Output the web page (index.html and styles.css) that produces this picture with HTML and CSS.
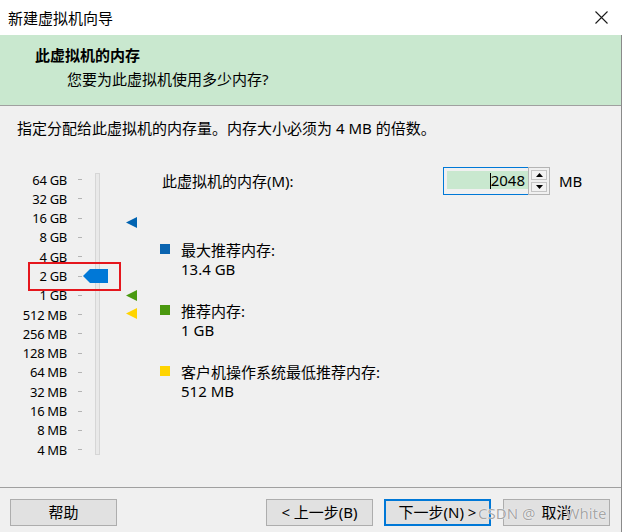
FILE: index.html
```html
<!DOCTYPE html>
<html lang="zh-CN">
<head>
<meta charset="utf-8">
<title>新建虚拟机向导</title>
<link rel="stylesheet" href="styles.css">
</head>
<body>
<div class="window">
  <div class="titlebar">
    <span class="title">新建虚拟机向导</span>
    <svg class="close" width="13" height="13" viewBox="0 0 13 13"><path d="M0.5 0.5 L12.5 12.5 M12.5 0.5 L0.5 12.5" stroke="#1a1a1a" stroke-width="1.1" fill="none"/></svg>
  </div>
  <div class="frame">
    <div class="header">
      <div class="h-title">此虚拟机的内存</div>
      <div class="h-sub">您要为此虚拟机使用多少内存?</div>
    </div>
    <div class="content">
      <p class="intro">指定分配给此虚拟机的内存量。内存大小必须为 4 MB 的倍数。</p>
      <div class="main">
        <div class="slider">
          <ul class="scale">
            <li><span class="lbl">64 GB</span><i class="tick"></i></li>
            <li><span class="lbl">32 GB</span><i class="tick"></i></li>
            <li><span class="lbl">16 GB</span><i class="tick"></i></li>
            <li><span class="lbl">8 GB</span><i class="tick"></i></li>
            <li><span class="lbl">4 GB</span><i class="tick"></i></li>
            <li><span class="lbl">2 GB</span><i class="tick"></i></li>
            <li><span class="lbl">1 GB</span><i class="tick"></i></li>
            <li><span class="lbl">512 MB</span><i class="tick"></i></li>
            <li><span class="lbl">256 MB</span><i class="tick"></i></li>
            <li><span class="lbl">128 MB</span><i class="tick"></i></li>
            <li><span class="lbl">64 MB</span><i class="tick"></i></li>
            <li><span class="lbl">32 MB</span><i class="tick"></i></li>
            <li><span class="lbl">16 MB</span><i class="tick"></i></li>
            <li><span class="lbl">8 MB</span><i class="tick"></i></li>
            <li><span class="lbl">4 MB</span><i class="tick"></i></li>
          </ul>
          <div class="track"></div>
          <svg class="thumb" style="top:102px" width="25" height="14" viewBox="0 0 25 14"><polygon points="0,7 7,0 25,0 25,14 7,14" fill="#0078d7"/></svg>
          <svg class="marker" style="top:50px" width="11" height="11" viewBox="0 0 11 11"><polygon points="0,5.5 11,0 11,11" fill="#0063b1"/></svg>
          <svg class="marker" style="top:123px" width="11" height="11" viewBox="0 0 11 11"><polygon points="0,5.5 11,0 11,11" fill="#4a9a10"/></svg>
          <svg class="marker" style="top:141px" width="11" height="11" viewBox="0 0 11 11"><polygon points="0,5.5 11,0 11,11" fill="#ffd400"/></svg>
          <div class="highlight"></div>
        </div>
        <div class="settings">
          <div class="mem-row">
            <span class="mem-label">此虚拟机的内存(M):</span>
            <div class="spin">
              <div class="field"><span class="sel"><span class="caret"></span>2048</span></div>
              <div class="spin-btns">
                <span class="sbtn"><svg width="7" height="4" viewBox="0 0 7 4"><polygon points="0,4 3.5,0 7,4" fill="#000"/></svg></span>
                <span class="sbtn"><svg width="7" height="4" viewBox="0 0 7 4"><polygon points="0,0 7,0 3.5,4" fill="#000"/></svg></span>
              </div>
            </div>
            <span class="unit">MB</span>
          </div>
          <ul class="legend">
            <li><i class="sq blue"></i><div class="ltext"><div>最大推荐内存:</div><div>13.4 GB</div></div></li>
            <li><i class="sq green"></i><div class="ltext"><div>推荐内存:</div><div>1 GB</div></div></li>
            <li><i class="sq yellow"></i><div class="ltext"><div>客户机操作系统最低推荐内存:</div><div>512 MB</div></div></li>
          </ul>
        </div>
      </div>
    </div>
    <div class="footer">
      <button class="btn">帮助</button>
      <div class="nav">
        <button class="btn">&lt; 上一步(B)</button>
        <button class="btn primary">下一步(N) &gt;</button>
        <button class="btn">取消</button>
      </div>
      <span class="watermark">CSDN @<span class="gap"></span>White</span>
    </div>
  </div>
</div>
</body>
</html>
```

FILE: styles.css
```css
* { box-sizing: border-box; }
html, body {
  margin: 0;
  padding: 0;
  width: 622px;
  height: 532px;
  overflow: hidden;
  background: #f0f0f0;
}
body {
  font-family: "Noto Sans", "Noto Sans CJK SC", sans-serif;
  font-size: 15px;
  color: #000;
}
ul { list-style: none; margin: 0; padding: 0; }

.window { width: 622px; height: 532px; }

.titlebar {
  height: 35px;
  background: #fff;
  display: flex;
  align-items: center;
  justify-content: space-between;
  padding: 0 14px 0 8px;
}
.title { line-height: 20px; color: #000; }
.close { display: block; }

.frame {
  border-right: 1px solid #8a8a8a;
  height: 497px;
}

.header {
  height: 71px;
  background: #c9e8cf;
  border-bottom: 1px solid #a0a0a0;
  padding: 10px 0 0 35px;
}
.h-title { font-weight: 700; line-height: 20px; }
.h-sub { margin: 4px 0 0 32px; line-height: 20px; }

.content {
  height: 381px;
  background: #f0f0f0;
}
.intro {
  margin: 0;
  padding: 12px 0 0 17px;
  line-height: 20px;
}

.main {
  display: flex;
  margin-top: 29px;
}

.slider {
  position: relative;
  width: 160px;
  display: flex;
  padding-top: 3px;
}
.scale li {
  display: flex;
  align-items: center;
  height: 19.29px;
}
.lbl {
  width: 67px;
  text-align: right;
  font-size: 13px;
  letter-spacing: -0.3px;
  line-height: 16px;
  white-space: nowrap;
}
.tick {
  display: block;
  width: 4px;
  height: 1px;
  margin-left: 11px;
  background: #b4b4b4;
}
.track {
  margin: 3px 0 0 13px;
  width: 5px;
  height: 282px;
  background: #e9e9e9;
  border: 1px solid #d6d6d6;
}
.thumb {
  position: absolute;
  left: 83px;
}
.marker {
  position: absolute;
  left: 126px;
}
.highlight {
  position: absolute;
  left: 28px;
  top: 95px;
  width: 93px;
  height: 29px;
  border: 2px solid #e5161d;
}

.settings { flex: 1; }
.mem-row {
  display: flex;
  align-items: center;
  height: 28px;
}
.mem-label {
  width: 283px;
  padding-left: 2px;
  line-height: 20px;
}
.spin {
  display: flex;
  height: 28px;
}
.field {
  width: 85px;
  height: 28px;
  border: 1px solid #0078d7;
  border-right: none;
  padding: 3px 0 0 3px;
}
.sel {
  display: block;
  height: 18px;
  background: #c9e8cf;
  text-align: right;
  padding-right: 3px;
  line-height: 18px;
}
.caret {
  display: inline-block;
  width: 1px;
  height: 16px;
  background: #000;
  vertical-align: -3px;
}
.spin-btns {
  width: 22px;
  height: 28px;
  border: 1px solid #b4b4b4;
  padding: 2px 2px;
  display: flex;
  flex-direction: column;
  gap: 2px;
}
.sbtn {
  flex: 1;
  display: flex;
  align-items: center;
  justify-content: center;
  background: #f2f2f2;
  border: 1px solid #c4c4c4;
}
.sbtn svg { display: block; }
.unit {
  margin-left: 9px;
  line-height: 20px;
}

.legend {
  margin-top: 46px;
}
.legend li {
  display: flex;
  margin-bottom: 23px;
}
.sq {
  display: block;
  width: 10px;
  height: 10px;
  margin-top: 3px;
}
.sq.blue { background: #0a64b0; }
.sq.green { background: #4a980f; }
.sq.yellow { background: #ffd400; }
.ltext {
  margin-left: 11px;
  line-height: 19px;
}

.footer {
  position: relative;
  height: 45px;
  border-top: 1px solid #a0a0a0;
  display: flex;
  align-items: flex-start;
  padding: 11px 11px 0 10px;
}
.nav {
  margin-left: auto;
  display: flex;
  gap: 11px;
}
.nav .btn:last-child { margin-left: 1px; }
.btn {
  width: 107px;
  height: 27px;
  background: #e1e1e1;
  border: 1px solid #adadad;
  font-family: "Noto Sans", "Noto Sans CJK SC", sans-serif;
  font-size: 15px;
  color: #000;
  padding: 0;
  line-height: 23px;
}
.btn.primary {
  border: 2px solid #0078d7;
}
.watermark {
  position: absolute;
  left: 478px;
  top: 15px;
  line-height: 20px;
  font-size: 15px;
  color: #a6a6a6;
  text-shadow: 0 0 1px #fff, 0 0 1px #fff;
  white-space: nowrap;
}
.gap {
  display: inline-block;
  width: 30px;
}
```
